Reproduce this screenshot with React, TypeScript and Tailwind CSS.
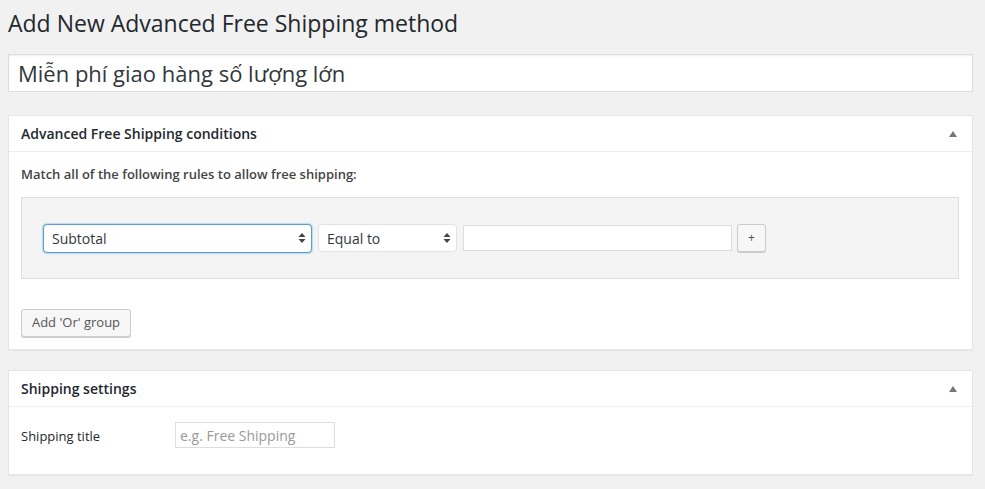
import { ReactNode } from 'react';

const font = { fontFamily: '"Open Sans", "Noto Sans", sans-serif' };

function Caret() {
  return (
    <svg width="8" height="12" viewBox="0 0 8 12" className="shrink-0">
      <path d="M4 1 L7.5 5 L0.5 5 Z" fill="#444" />
      <path d="M4 11 L7.5 7 L0.5 7 Z" fill="#444" />
    </svg>
  );
}

function Postbox({ title, children }: { title: string; children: ReactNode }) {
  return (
    <div className="bg-white border border-[#e5e5e5] shadow-[0_1px_1px_rgba(0,0,0,0.04)]">
      <div className="h-[36px] flex items-center justify-between pl-[12px] pr-[14px] border-b border-[#eee]">
        <h2 className="text-[14px] font-semibold text-[#23282d]">{title}</h2>
        <svg width="10" height="8" viewBox="0 0 10 8">
          <path d="M5 1 L9 7 L1 7 Z" fill="#72777c" />
        </svg>
      </div>
      {children}
    </div>
  );
}

export default function App() {
  return (
    <div className="w-[985px] h-[489px] bg-[#f1f1f1] px-[8px] pr-[12px] overflow-hidden" style={font}>
      <h1 className="text-[23px] leading-[29px] text-[#23282d] pt-[9px] pb-[16px]">
        Add New Advanced Free Shipping method
      </h1>
      <div className="h-[38px] bg-white border border-[#ddd] flex items-center px-[9px] text-[22px] text-[#32373c] shadow-[inset_0_1px_2px_rgba(0,0,0,0.07)]">
        Miễn phí giao hàng số lượng lớn
      </div>

      <div className="mt-[23px]">
        <Postbox title="Advanced Free Shipping conditions">
          <div className="px-[12px] pt-[13px] pb-[12px]">
            <p className="text-[13px] font-semibold text-[#444] leading-[18px]">
              Match all of the following rules to allow free shipping:
            </p>
            <div className="mt-[14px] mr-[1px] h-[82px] bg-[#f4f4f4] border border-[#dedede] flex items-center pl-[21px] gap-[6px]">
              <div className="w-[269px] h-[29px] bg-white border border-[#5b9dd9] rounded-[4px] shadow-[0_0_2px_rgba(30,140,190,0.8)] flex items-center justify-between pl-[8px] pr-[5px] text-[14px] text-[#32373c]">
                <span>Subtotal</span>
                <Caret />
              </div>
              <div className="w-[139px] h-[28px] bg-white border border-[#e2e2e2] rounded-[4px] flex items-center justify-between pl-[8px] pr-[5px] text-[14px] text-[#32373c]">
                <span>Equal to</span>
                <Caret />
              </div>
              <div className="w-[269px] h-[26px] bg-white border border-[#ddd]" />
              <div className="w-[29px] h-[28px] -ml-[1px] bg-[#f7f7f7] border border-[#ccc] rounded-[3px] shadow-[0_1px_0_#ccc] flex items-center justify-center text-[12px] text-[#555]">
                +
              </div>
            </div>
            <div className="mt-[30px] w-[110px] h-[28px] bg-[#f7f7f7] border border-[#ccc] rounded-[3px] shadow-[0_1px_0_#ccc] flex items-center justify-center text-[13px] text-[#555]">
              Add 'Or' group
            </div>
          </div>
        </Postbox>
      </div>

      <div className="mt-[20px]">
        <Postbox title="Shipping settings">
          <div className="flex items-center pl-[12px] pt-[15px] pb-[26px]">
            <span className="w-[154px] text-[13px] text-[#23282d] pt-[4px]">Shipping title</span>
            <div className="w-[160px] h-[26px] bg-white border border-[#ddd] flex items-center px-[4px] text-[14px] text-[#999]">
              e.g. Free Shipping
            </div>
          </div>
        </Postbox>
      </div>
    </div>
  );
}
